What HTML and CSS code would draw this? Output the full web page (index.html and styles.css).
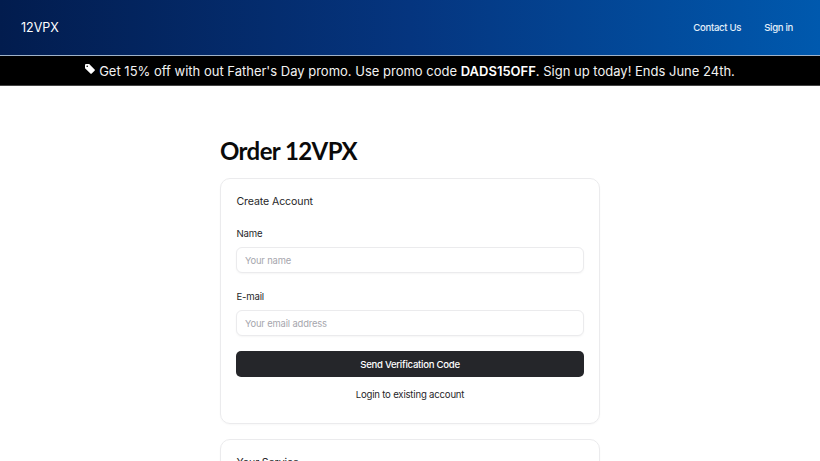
FILE: index.html
```html
<!DOCTYPE html>
<html lang="en">
<head>
<meta charset="utf-8">
<title>Order 12VPX</title>
<link rel="stylesheet" href="styles.css">
</head>
<body>
<header class="topbar">
  <a class="brand" href="#">12VPX</a>
  <nav class="nav">
    <a href="#">Contact Us</a>
    <a href="#">Sign in</a>
  </nav>
</header>
<div class="promo">
  <svg class="tag" width="10" height="10" viewBox="0 0 10 10" aria-hidden="true"><path fill-rule="evenodd" d="M1 0h3.200L9.600 5.400a.9.9 0 0 1 0 1.300L6.700 9.600a.9.900 0 0 1-1.300 0L0 4.200V1a1 1 0 0 1 1-1zM2.200 1.400a.8.8 0 1 0 0 1.600.8.8 0 0 0 0-1.600z" fill="#fff"/></svg>
  <span>Get 15% off with out Father's Day promo. Use promo code <strong>DADS15OFF</strong>. Sign up today! Ends June 24th.</span>
</div>
<main class="page">
  <h1 class="title">Order 12VPX</h1>
  <section class="card">
    <h2 class="card-title">Create Account</h2>
    <label class="field">
      <span class="label">Name</span>
      <input class="input" type="text" placeholder="Your name">
    </label>
    <label class="field">
      <span class="label">E-mail</span>
      <input class="input" type="email" placeholder="Your email address">
    </label>
    <button class="primary" type="button">Send Verification Code</button>
    <a class="login" href="#">Login to existing account</a>
  </section>
  <section class="card">
    <h2 class="card-title">Your Service</h2>
  </section>
</main>
</body>
</html>
```
FILE: styles.css
```css
* { box-sizing: border-box; }
html, body { margin: 0; height: 461px; overflow: hidden; }
body { font-family: Inter, "Liberation Sans", sans-serif; background: #fff; color: #18181b; }
a { text-decoration: none; color: inherit; }

.topbar {
  height: 56px;
  display: flex;
  align-items: center;
  justify-content: space-between;
  padding: 0 27px 0 21px;
  background: linear-gradient(90deg, #021c4e 0%, #05357f 50%, #0059ae 100%);
  border-bottom: 1px solid #9fb2c8;
}
.brand { color: #fff; font-size: 12.5px; font-weight: 400; }
.nav { display: flex; gap: 23px; }
.nav a { color: #e3effa; font-size: 9.6px; font-weight: 500; letter-spacing: -.32px; }

.promo {
  height: 30px;
  background: #000;
  color: #f2f2f2;
  display: flex;
  align-items: center;
  justify-content: center;
  gap: 4px;
  font-size: 13px;
  border-bottom: 1px solid #444;
}
.promo strong { font-weight: 600; color: #fff; }
.tag { margin-top: -4px; }

.page { width: 380px; margin: 0 auto; padding-top: 48px; }
.title { margin: 0 0 10px; font: 700 24px/34px Lato, sans-serif; letter-spacing: -.6px; color: #0a0a0a; }

.card {
  border: 1px solid #ebebed;
  border-radius: 10px;
  padding: 15px;
  margin-bottom: 15px;
  height: 246px;
  display: flex;
  flex-direction: column;
  box-shadow: 0 1px 2px rgba(0,0,0,.03);
}
.card-title { margin: 0 0 17px; padding-left: .5px; font-size: 10.6px; line-height: 16px; font-weight: 400; letter-spacing: -.12px; color: #27272a; }

.field { display: block; margin-bottom: 17px; }
.label { display: block; padding-left: .5px; font-size: 9.6px; line-height: 14px; font-weight: 400; letter-spacing: -.2px; color: #27272a; margin-bottom: 6px; }
.input {
  display: block;
  width: 100%;
  height: 26px;
  padding: 0 8px;
  border: 1px solid #ebebed;
  border-radius: 6px;
  font: 400 9.4px Inter, sans-serif;
  letter-spacing: -.15px;
  background: #fff;
  box-shadow: 0 1px 2px rgba(0,0,0,.04);
}
.input::placeholder { color: #a6a6ad; opacity: 1; }

.primary {
  height: 26px;
  width: 100%;
  border: 0;
  border-radius: 5px;
  background: #25262a;
  color: #fff;
  font: 500 9.6px Inter, sans-serif;
  letter-spacing: -.28px;
  margin-top: -2px;
}
.login { display: block; text-align: center; font-size: 9.6px; line-height: 14px; font-weight: 400; letter-spacing: -.2px; color: #27272a; margin-top: 11px; }
```
